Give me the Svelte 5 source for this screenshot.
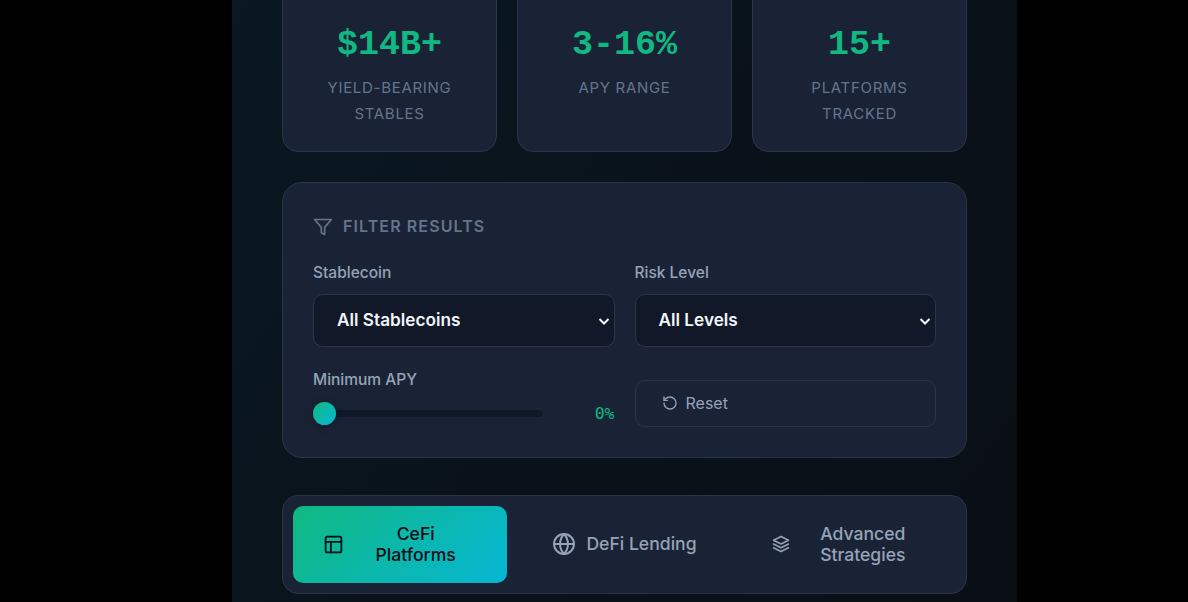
<script>
  let minApy = 0;
  const stats = [
    { value: '$14B+', label: 'Yield-Bearing Stables' },
    { value: '3-16%', label: 'APY Range' },
    { value: '15+', label: 'Platforms Tracked' }
  ];
</script>

<div class="page">
  <main class="column">
    <section class="stats">
      {#each stats as stat}
        <div class="stat">
          <div class="value">{stat.value}</div>
          <div class="label">{stat.label}</div>
        </div>
      {/each}
    </section>

    <section class="filters">
      <h3 class="filters-title">
        <svg width="20" height="20" viewBox="0 0 24 24" fill="none" stroke="currentColor" stroke-width="2" stroke-linecap="round" stroke-linejoin="round">
          <polygon points="22 3 2 3 10 12.46 10 19 14 21 14 12.46 22 3" />
        </svg>
        FILTER RESULTS
      </h3>
      <div class="filter-grid">
        <div class="field">
          <span class="field-label">Stablecoin</span>
          <div class="select">
            All Stablecoins
            <svg class="chevron" width="14" height="14" viewBox="0 0 14 14" fill="none" stroke="currentColor" stroke-width="2"><path d="M2.5 5l4.500 4.500L11.500 5" /></svg>
          </div>
        </div>
        <div class="field">
          <span class="field-label">Risk Level</span>
          <div class="select">
            All Levels
            <svg class="chevron" width="14" height="14" viewBox="0 0 14 14" fill="none" stroke="currentColor" stroke-width="2"><path d="M2.5 5l4.500 4.500L11.500 5" /></svg>
          </div>
        </div>
        <div class="field range-field">
          <span class="field-label">Minimum APY</span>
          <div class="range-row">
            <div class="track"><span class="thumb"></span></div>
            <span class="range-value">{minApy}%</span>
          </div>
        </div>
        <div class="reset-cell">
          <button class="reset">
            <svg width="16" height="16" viewBox="0 0 24 24" fill="none" stroke="currentColor" stroke-width="2" stroke-linecap="round" stroke-linejoin="round">
              <path d="M3 12a9 9 0 1 0 9-9 9.75 9.75 0 0 0-6.74 2.74L3 8" />
              <path d="M3 3v5h5" />
            </svg>
            Reset
          </button>
        </div>
      </div>
    </section>

    <nav class="tabs">
      <button class="tab active">
        <svg width="21" height="21" viewBox="0 0 24 24" fill="none" stroke="currentColor" stroke-width="2" stroke-linecap="round" stroke-linejoin="round">
          <rect x="3" y="3" width="18" height="18" rx="2" />
          <path d="M3 9h18" />
          <path d="M9 21V9" />
        </svg>
        <span class="grow">CeFi<br />Platforms</span>
      </button>
      <button class="tab">
        <svg width="24" height="24" viewBox="0 0 24 24" fill="none" stroke="currentColor" stroke-width="2" stroke-linecap="round" stroke-linejoin="round">
          <circle cx="12" cy="12" r="10" />
          <path d="M2 12h20" />
          <path d="M12 2a15.3 15.3 0 0 1 4 10 15.3 15.3 0 0 1-4 10 15.3 15.3 0 0 1-4-10 15.3 15.3 0 0 1 4-10z" />
        </svg>
        <span>DeFi Lending</span>
      </button>
      <button class="tab">
        <svg width="18" height="18" viewBox="0 0 24 24" fill="none" stroke="currentColor" stroke-width="2" stroke-linecap="round" stroke-linejoin="round">
          <path d="M12 2 2 7l10 5 10-5-10-5z" />
          <path d="m2 12 10 5 10-5" />
          <path d="m2 17 10 5 10-5" />
        </svg>
        <span class="grow">Advanced<br />Strategies</span>
      </button>
    </nav>
  </main>
</div>

<style>
  :global(body) {
    margin: 0;
    background: #000;
    overflow: hidden;
  }

  .page {
    height: 602px;
    overflow: hidden;
    padding-left: 232px;
    font-family: "Inter", "Liberation Sans", sans-serif;
  }

  .column {
    width: 785px;
    height: 100%;
    padding: 0 50px;
    box-sizing: border-box;
    background: linear-gradient(125deg, #0a1823 0%, #09121a 50%, #0a0f15 100%);
    display: flex;
    flex-direction: column;
  }

  .stats {
    display: grid;
    grid-template-columns: repeat(3, 1fr);
    gap: 20px;
    margin-top: -30px;
  }

  .stat {
    height: 182px;
    box-sizing: border-box;
    padding-top: 53px;
    background: #1a2335;
    border: 1px solid #2a3548;
    border-radius: 16px;
    text-align: center;
  }

  .value {
    font-family: "Liberation Mono", monospace;
    font-size: 35px;
    font-weight: 700;
    line-height: 42px;
    color: #10b981;
  }

  .label {
    margin: 9px 30px 0;
    font-size: 15px;
    line-height: 26px;
    letter-spacing: 0.7px;
    text-transform: uppercase;
    color: #64748b;
  }

  .filters {
    margin-top: 30px;
    box-sizing: border-box;
    padding: 30px;
    background: #1a2335;
    border: 1px solid #2a3548;
    border-radius: 20px;
  }

  .filters-title {
    margin: 0 0 24px;
    display: flex;
    align-items: center;
    gap: 10px;
    font-size: 16px;
    font-weight: 600;
    line-height: 27px;
    letter-spacing: 1.1px;
    color: #64748b;
  }

  .filter-grid {
    display: grid;
    grid-template-columns: 1fr 1fr;
    column-gap: 20px;
    row-gap: 24px;
  }

  .field-label {
    display: block;
    margin-bottom: 13px;
    font-size: 15.5px;
    font-weight: 500;
    line-height: 17px;
    color: #94a3b8;
  }

  .range-field {
    padding-bottom: 2px;
  }

  .select {
    height: 53px;
    box-sizing: border-box;
    display: flex;
    align-items: center;
    justify-content: space-between;
    padding: 0 3px 2px 23px;
    background: #111827;
    border: 1px solid #2a3548;
    border-radius: 10px;
    font-size: 17.2px;
    font-weight: 600;
    color: #f1f5f9;
  }

  .chevron {
    margin-top: 2px;
  }

  .range-row {
    display: flex;
    align-items: center;
    gap: 51.5px;
    height: 24px;
  }

  .track {
    flex: 1;
    position: relative;
    height: 7px;
    border-radius: 4px;
    background: #111827;
  }

  .thumb {
    position: absolute;
    left: 0;
    top: -8px;
    width: 23px;
    height: 23px;
    border-radius: 50%;
    background: linear-gradient(135deg, #10b981, #06b6d4);
    box-shadow: 0 2px 8px rgba(0, 0, 0, 0.3);
  }

  .range-value {
    font-family: "DejaVu Sans Mono", monospace;
    font-size: 16.5px;
    color: #10b981;
  }

  .reset-cell {
    display: flex;
    align-items: flex-end;
  }

  .reset {
    width: 100%;
    height: 47px;
    display: flex;
    align-items: center;
    gap: 8px;
    padding: 0 26px 2px;
    background: transparent;
    border: 1px solid #2a3548;
    border-radius: 10px;
    font-family: inherit;
    font-size: 16px;
    color: #94a3b8;
  }

  .tabs {
    margin-top: 37px;
    height: 99px;
    box-sizing: border-box;
    display: grid;
    grid-template-columns: repeat(3, 1fr);
    gap: 10px;
    padding: 10px;
    background: #1a2335;
    border: 1px solid #2a3548;
    border-radius: 16px;
  }

  .tab {
    display: flex;
    align-items: center;
    justify-content: center;
    gap: 10px;
    padding: 0 30px 2px;
    background: transparent;
    border: none;
    border-radius: 10px;
    font-family: inherit;
    font-size: 17.6px;
    font-weight: 500;
    line-height: 21px;
    color: #94a3b8;
  }

  .tab svg {
    flex: none;
    margin-top: 1px;
  }

  .tab .grow {
    flex: 1;
    text-align: center;
  }

  .tab.active {
    background: linear-gradient(135deg, #10b981, #06b6d4);
    color: #0a0e17;
  }
</style>
